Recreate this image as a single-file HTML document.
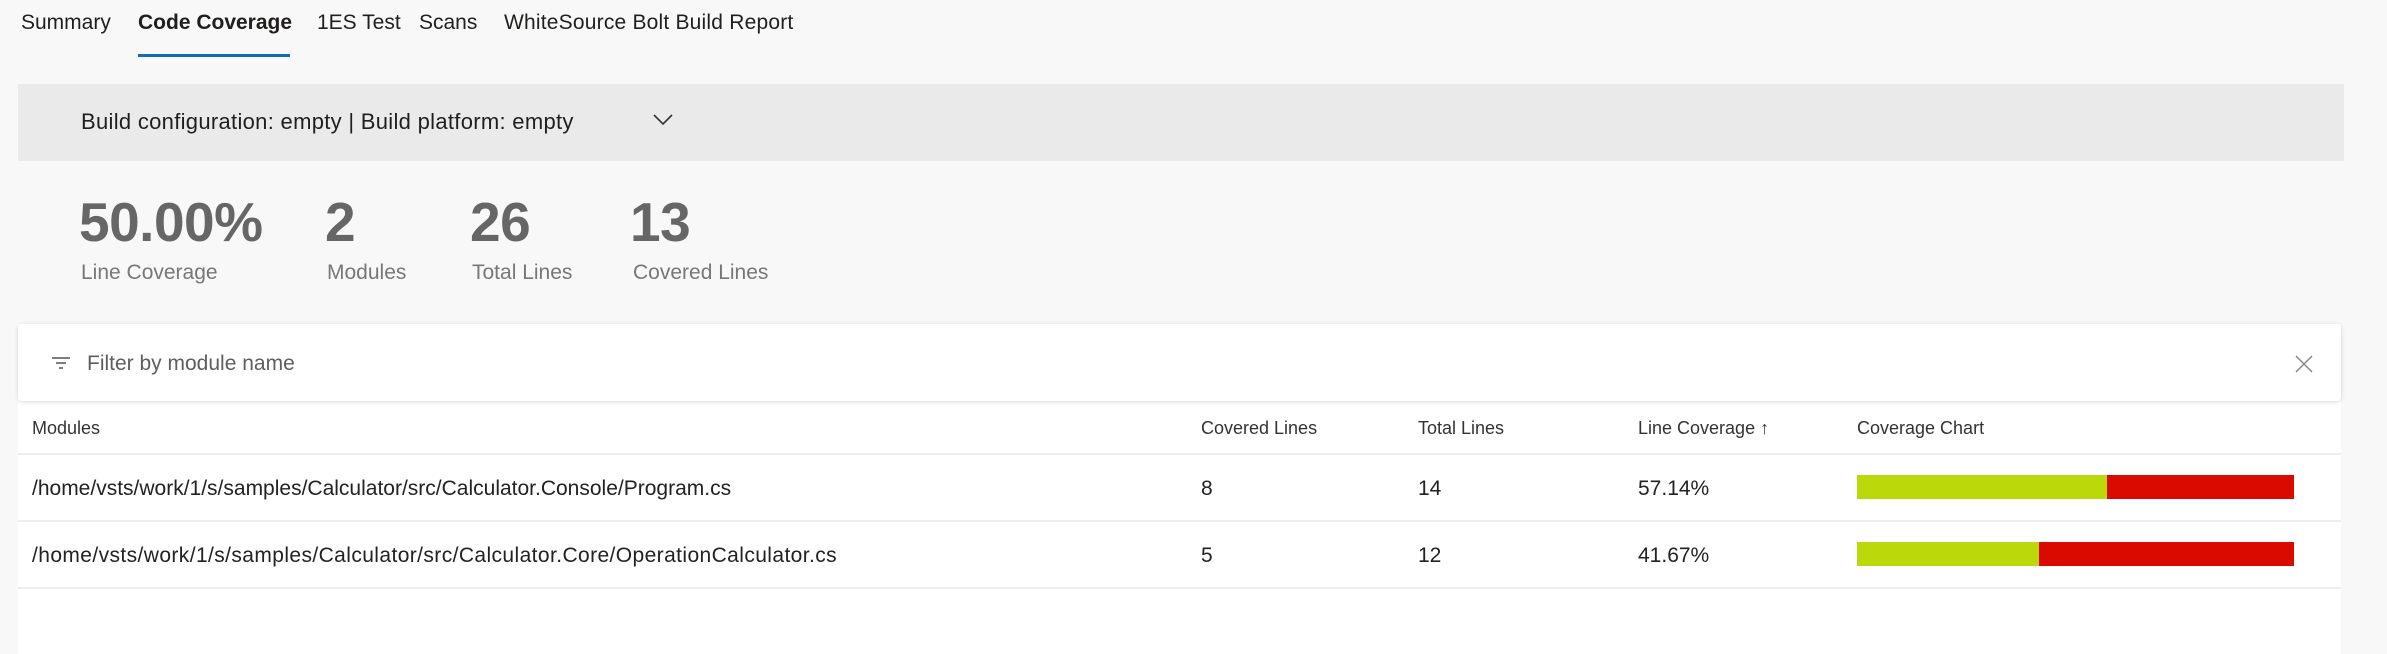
<!DOCTYPE html>
<html><head><meta charset="utf-8"><style>
*{margin:0;padding:0;box-sizing:border-box}
body{width:2387px;height:648px;background:#f8f8f8;font-family:"Segoe UI","Liberation Sans",sans-serif;color:#201f1e;position:relative;overflow:hidden}
.a{position:absolute;white-space:nowrap}
.tab{font-size:21px;top:11px}
.stat{font-size:55px;font-weight:600;color:#666;top:188px;letter-spacing:-0.5px}
.lbl{font-size:21px;color:#777;top:261px}
.h{font-size:18px;top:418px;color:#333}
.c{font-size:21px;color:#222}
.bar{position:absolute;height:24px;left:1857px;width:437px;background:#da0a00}
.bar div{height:100%;background:#bad80a}
.line{position:absolute;left:18px;width:2323px;height:2px;background:#eeeeee}
</style></head><body>
<div class="a tab" style="left:21px">Summary</div>
<div class="a tab" style="left:138px;font-weight:600">Code Coverage</div>
<div style="position:absolute;left:138px;top:54px;width:152px;height:3px;background:#0f6cbd"></div>
<div class="a tab" style="left:317px">1ES Test</div>
<div class="a tab" style="left:419px">Scans</div>
<div class="a tab" style="left:504px;letter-spacing:0.2px">WhiteSource Bolt Build Report</div>

<div style="position:absolute;left:18px;top:84px;width:2326px;height:77px;background:#eaeaea"></div>
<div class="a" style="left:81px;top:109px;font-size:22px;letter-spacing:0.3px">Build configuration: empty | Build platform: empty</div>
<svg class="a" style="left:652px;top:113px" width="22" height="14" viewBox="0 0 22 14"><path d="M2 2 L11 11 L20 2" fill="none" stroke="#333" stroke-width="1.6"/></svg>

<div class="a stat" style="left:79px;top:190px">50.00%</div>
<div class="a stat" style="left:325px;top:190px">2</div>
<div class="a stat" style="left:470px;top:190px">26</div>
<div class="a stat" style="left:630px;top:190px">13</div>
<div class="a lbl" style="left:81px">Line Coverage</div>
<div class="a lbl" style="left:327px">Modules</div>
<div class="a lbl" style="left:472px">Total Lines</div>
<div class="a lbl" style="left:633px">Covered Lines</div>

<div style="position:absolute;left:18px;top:324px;width:2323px;height:330px;background:#fff"></div>
<div style="position:absolute;left:18px;top:324px;width:2323px;height:77px;background:#fff;border-radius:4px;box-shadow:0 1px 4px rgba(0,0,0,0.15)"></div>
<svg class="a" style="left:51px;top:356px" width="20" height="16" viewBox="0 0 20 16"><path d="M1 2h18M5 7h10M8 12h4" stroke="#555" stroke-width="1.5"/></svg>
<div class="a" style="left:87px;top:352px;font-size:21px;color:#605e5c">Filter by module name</div>
<svg class="a" style="left:2294px;top:354px" width="20" height="20" viewBox="0 0 20 20"><path d="M2 2L18 18M18 2L2 18" stroke="#888" stroke-width="1.5"/></svg>

<div class="a h" style="left:32px">Modules</div>
<div class="a h" style="left:1201px">Covered Lines</div>
<div class="a h" style="left:1418px">Total Lines</div>
<div class="a h" style="left:1638px">Line Coverage ↑</div>
<div class="a h" style="left:1857px">Coverage Chart</div>
<div class="line" style="top:453px"></div>

<div class="a c" style="left:32px;top:477px">/home/vsts/work/1/s/samples/Calculator/src/Calculator.Console/Program.cs</div>
<div class="a c" style="left:1201px;top:477px">8</div>
<div class="a c" style="left:1418px;top:477px">14</div>
<div class="a c" style="left:1638px;top:477px">57.14%</div>
<div class="bar" style="top:475px"><div style="width:250px"></div></div>
<div class="line" style="top:520px"></div>

<div class="a c" style="left:32px;top:544px;letter-spacing:0.4px">/home/vsts/work/1/s/samples/Calculator/src/Calculator.Core/OperationCalculator.cs</div>
<div class="a c" style="left:1201px;top:544px">5</div>
<div class="a c" style="left:1418px;top:544px">12</div>
<div class="a c" style="left:1638px;top:544px">41.67%</div>
<div class="bar" style="top:542px"><div style="width:182px"></div></div>
<div class="line" style="top:587px"></div>
</body></html>
